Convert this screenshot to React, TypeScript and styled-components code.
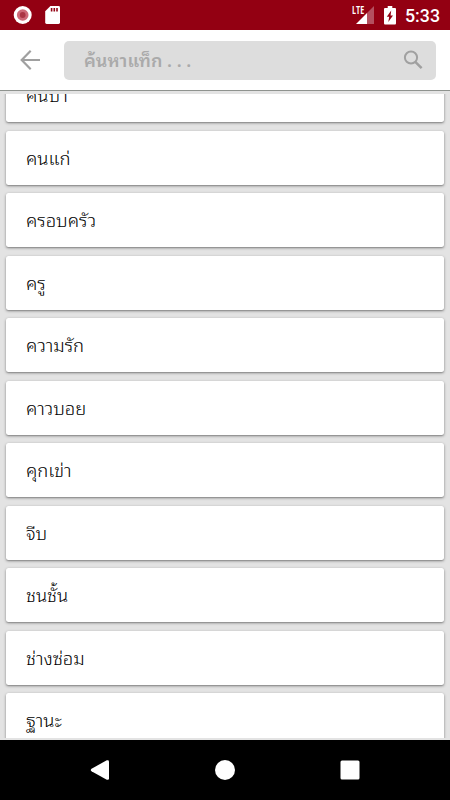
import React from "react";
import styled, { createGlobalStyle } from "styled-components";

const GlobalStyle = createGlobalStyle`
  * { box-sizing: border-box; }
  body { margin: 0; }
`;

const Screen = styled.div`
  width: 450px;
  height: 800px;
  display: flex;
  flex-direction: column;
  overflow: hidden;
  background: #e3e3e3;
  font-family: "Noto Sans Thai Looped", Roboto, sans-serif;
`;

const StatusBar = styled.header`
  flex: none;
  height: 30px;
  display: flex;
  align-items: center;
  justify-content: space-between;
  padding: 0 10px 0 13px;
  background: #930012;
  color: #fff;
`;

const StatusGroup = styled.div<{ $gap: number }>`
  display: flex;
  align-items: center;
  gap: ${(p) => p.$gap}px;
`;

const Clock = styled.span`
  font: 500 17.8px/30px Roboto, sans-serif;
  padding-top: 1px;
  margin-left: -1px;
`;

const AppBar = styled.div`
  flex: none;
  height: 61px;
  display: flex;
  align-items: center;
  padding: 0 14px 0 20px;
  gap: 23px;
  background: #fff;
  border-bottom: 1px solid #8f938f;
`;

const SearchBox = styled.div`
  flex: 1;
  height: 39px;
  display: flex;
  align-items: center;
  justify-content: space-between;
  padding: 0 13px 0 20px;
  border-radius: 5px;
  background: #ddd;
`;

const Placeholder = styled.span`
  font-size: 18px;
  line-height: 37px;
  padding-bottom: 2px;
  font-weight: 600;
  color: #aaa;
`;

const ListViewport = styled.main`
  flex: none;
  height: 644px;
  margin: 3px 0 2px;
  overflow: hidden;
`;

const TagList = styled.ul`
  list-style: none;
  margin: -26px 0 0;
  padding: 0 6px;
  display: flex;
  flex-direction: column;
  gap: 8.5px;
`;

const TagCard = styled.li`
  flex: none;
  height: 54px;
  padding: 0 20px;
  border-radius: 2.5px;
  background: #fff;
  box-shadow: 0 1px 3px rgba(0, 0, 0, 0.4), 0 1px 1px rgba(0, 0, 0, 0.12);
  font-size: 18.4px;
  font-weight: 300;
  line-height: 52px;
  color: #000;
`;

const NavBar = styled.nav`
  flex: none;
  height: 60px;
  display: flex;
  align-items: center;
  justify-content: space-between;
  padding: 0 90px;
  background: #000;
`;

const tags = ["คนบ้า", "คนแก่", "ครอบครัว", "ครู", "ความรัก", "คาวบอย", "คุกเข่า", "จีบ", "ชนชั้น", "ช่างซ่อม", "ฐานะ"];

const RecordIcon = () => (
  <svg width="20" height="20" viewBox="0 0 20 20">
    <circle cx="9.7" cy="10" r="9" fill="#fff" />
    <circle cx="9.7" cy="10" r="5.8" fill="#cd6877" />
    <circle cx="9.7" cy="10" r="2.9" fill="#aa3444" />
  </svg>
);

const SdCardIcon = () => (
  <svg width="16" height="20" viewBox="0 0 16 20">
    <path d="M5.4 1H13.6Q15 1 15 2.4V17.6Q15 19 13.6 19H1.6Q.2 19 .2 17.6V6.2Z" fill="#fff" />
    <path d="M6.6 3V6.4M9.3 3V6.4M12 3V6.4" stroke="#930012" strokeWidth="1.6" />
  </svg>
);

const LteLabel = styled.span`
  align-self: flex-start;
  margin: 5px -9px 0 0;
  width: 13px;
  font: 700 10.5px/10px "Open Sans", sans-serif;
  transform: scaleX(0.68);
  transform-origin: left;
`;

const SignalGroup = styled.div`
  display: flex;
  height: 30px;
  align-items: center;
`;

const SignalIcon = () => (
  <svg width="18" height="18" viewBox="0 0 18 18">
    <path d="M18 0V18H11V7Z" fill="#b4505f" />
    <path d="M0 18L11 7V18Z" fill="#fff" />
  </svg>
);

const BatteryIcon = () => (
  <svg width="12" height="19" viewBox="0 0 12 19">
    <path d="M3.7 0H8.3V2H11Q12 2 12 3V17.2Q12 18.4 11 18.4H1Q0 18.4 0 17.2V3Q0 2 1 2H3.7Z" fill="#fff" />
    <path d="M7.2 4.5L2.8 10.7H5.2L4.3 16L9 9.4H6.6Z" fill="#930012" />
  </svg>
);

const BackIcon = () => (
  <svg width="21" height="20" viewBox="0 0 21 20" fill="none" stroke="#a0a0a0" strokeWidth="2.2">
    <path d="M20 10H2M10.7 .8L1.7 10L10.7 19.2" />
  </svg>
);

const SearchIcon = () => (
  <svg width="20" height="20" viewBox="0 0 20 20" fill="none" stroke="#a0a0a0" strokeWidth="2">
    <circle cx="8" cy="7.5" r="6.1" />
    <path d="M12.3 11.8L18.6 18.1" strokeWidth="2.5" />
  </svg>
);

export default function App() {
  return (
    <>
      <GlobalStyle />
      <Screen>
        <StatusBar>
          <StatusGroup $gap={12}>
            <RecordIcon />
            <SdCardIcon />
          </StatusGroup>
          <StatusGroup $gap={10}>
            <SignalGroup>
              <LteLabel>LTE</LteLabel>
              <SignalIcon />
            </SignalGroup>
            <BatteryIcon />
            <Clock>5:33</Clock>
          </StatusGroup>
        </StatusBar>
        <AppBar>
          <BackIcon />
          <SearchBox>
            <Placeholder>ค้นหาแท็ก . . .</Placeholder>
            <SearchIcon />
          </SearchBox>
        </AppBar>
        <ListViewport>
          <TagList>
            {tags.map((tag) => (
              <TagCard key={tag}>{tag}</TagCard>
            ))}
          </TagList>
        </ListViewport>
        <NavBar>
          <svg width="20" height="20" viewBox="0 0 20 20">
            <path d="M1.5 8.7L16.8 .3Q19 -.3 19 1.5V18.5Q19 20.3 16.8 19.7L1.5 11.3Q0 10 1.5 8.7Z" fill="#fff" />
          </svg>
          <svg width="20" height="20" viewBox="0 0 20 20">
            <circle cx="10" cy="10" r="10" fill="#fff" />
          </svg>
          <svg width="20" height="20" viewBox="0 0 20 20">
            <rect x=".5" y=".5" width="19" height="19" rx="1.5" fill="#fff" />
          </svg>
        </NavBar>
      </Screen>
    </>
  );
}
